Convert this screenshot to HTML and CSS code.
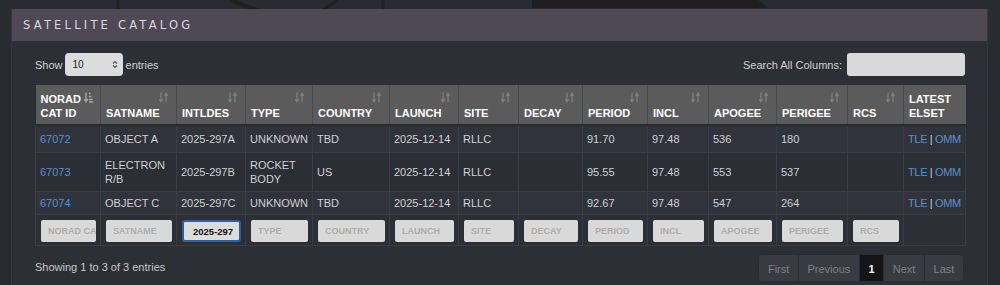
FILE: index.html
```html
<!DOCTYPE html>
<html lang="en">
<head>
    <meta charset="UTF-8">
    <title>Satellite Catalog</title>
    <link rel="stylesheet" href="styles.css">
</head>
<body>
    <div class="panel">
        <div class="panel-head">SATELLITE CATALOG</div>
        <div class="panel-body">
            <div class="controls">
                <label class="length">Show
                    <span class="select">10
                        <svg class="updown" width="6" height="9" viewBox="0 0 6 9"><path d="M1 3.5 L3 1.5 L5 3.5 M1 5.5 L3 7.5 L5 5.5" fill="none" stroke="#555" stroke-width="1.2"/></svg>
                    </span>
                    entries</label>
                <label class="search">Search All Columns: <input type="text"></label>
            </div>
            <table class="catalog">
                <thead>
                    <tr>
                        <th class="w65 sorted">NORAD<br>CAT ID<svg class="sort" width="9" height="11" viewBox="0 0 9 11"><path d="M2 0.5 V9 M0.3 7 L2 9.8 L3.7 7" fill="none" stroke="currentColor" stroke-width="1.3"/><path d="M5 1.5 H6.5 M5 4.5 H7.5 M5 7.5 H8.5 M5 10 H8.8" fill="none" stroke="currentColor" stroke-width="1.3"/></svg></th>
                        <th class="w76">SATNAME<svg class="sort" width="9" height="11" viewBox="0 0 9 11"><path d="M2 0.5 V9 M0.3 7 L2 9.8 L3.7 7 M7 10.5 V2 M5.3 4 L7 1.2 L8.7 4" fill="none" stroke="currentColor" stroke-width="1.3"/></svg></th>
                        <th class="w69">INTLDES<svg class="sort" width="9" height="11" viewBox="0 0 9 11"><path d="M2 0.5 V9 M0.3 7 L2 9.8 L3.7 7 M7 10.5 V2 M5.3 4 L7 1.2 L8.7 4" fill="none" stroke="currentColor" stroke-width="1.3"/></svg></th>
                        <th class="w67">TYPE<svg class="sort" width="9" height="11" viewBox="0 0 9 11"><path d="M2 0.5 V9 M0.3 7 L2 9.8 L3.7 7 M7 10.5 V2 M5.3 4 L7 1.2 L8.7 4" fill="none" stroke="currentColor" stroke-width="1.3"/></svg></th>
                        <th class="w77">COUNTRY<svg class="sort" width="9" height="11" viewBox="0 0 9 11"><path d="M2 0.5 V9 M0.3 7 L2 9.8 L3.7 7 M7 10.5 V2 M5.3 4 L7 1.2 L8.7 4" fill="none" stroke="currentColor" stroke-width="1.3"/></svg></th>
                        <th class="w69">LAUNCH<svg class="sort" width="9" height="11" viewBox="0 0 9 11"><path d="M2 0.5 V9 M0.3 7 L2 9.8 L3.7 7 M7 10.5 V2 M5.3 4 L7 1.2 L8.7 4" fill="none" stroke="currentColor" stroke-width="1.3"/></svg></th>
                        <th class="w60">SITE<svg class="sort" width="9" height="11" viewBox="0 0 9 11"><path d="M2 0.5 V9 M0.3 7 L2 9.8 L3.7 7 M7 10.5 V2 M5.3 4 L7 1.2 L8.7 4" fill="none" stroke="currentColor" stroke-width="1.3"/></svg></th>
                        <th class="w64">DECAY<svg class="sort" width="9" height="11" viewBox="0 0 9 11"><path d="M2 0.5 V9 M0.3 7 L2 9.8 L3.7 7 M7 10.5 V2 M5.3 4 L7 1.2 L8.7 4" fill="none" stroke="currentColor" stroke-width="1.3"/></svg></th>
                        <th class="w65">PERIOD<svg class="sort" width="9" height="11" viewBox="0 0 9 11"><path d="M2 0.5 V9 M0.3 7 L2 9.8 L3.7 7 M7 10.5 V2 M5.3 4 L7 1.2 L8.7 4" fill="none" stroke="currentColor" stroke-width="1.3"/></svg></th>
                        <th class="w61">INCL<svg class="sort" width="9" height="11" viewBox="0 0 9 11"><path d="M2 0.5 V9 M0.3 7 L2 9.8 L3.7 7 M7 10.5 V2 M5.3 4 L7 1.2 L8.7 4" fill="none" stroke="currentColor" stroke-width="1.3"/></svg></th>
                        <th class="w68">APOGEE<svg class="sort" width="9" height="11" viewBox="0 0 9 11"><path d="M2 0.5 V9 M0.3 7 L2 9.8 L3.7 7 M7 10.5 V2 M5.3 4 L7 1.2 L8.7 4" fill="none" stroke="currentColor" stroke-width="1.3"/></svg></th>
                        <th class="w71">PERIGEE<svg class="sort" width="9" height="11" viewBox="0 0 9 11"><path d="M2 0.5 V9 M0.3 7 L2 9.8 L3.7 7 M7 10.5 V2 M5.3 4 L7 1.2 L8.7 4" fill="none" stroke="currentColor" stroke-width="1.3"/></svg></th>
                        <th class="w56">RCS<svg class="sort" width="9" height="11" viewBox="0 0 9 11"><path d="M2 0.5 V9 M0.3 7 L2 9.8 L3.7 7 M7 10.5 V2 M5.3 4 L7 1.2 L8.7 4" fill="none" stroke="currentColor" stroke-width="1.3"/></svg></th>
                        <th class="w62">LATEST<br>ELSET</th>
                    </tr>
                </thead>
                <tbody>
                    <tr>
                        <td><a href="#">67072</a></td>
                        <td>OBJECT A</td>
                        <td>2025-297A</td>
                        <td>UNKNOWN</td>
                        <td>TBD</td>
                        <td>2025-12-14</td>
                        <td>RLLC</td>
                        <td></td>
                        <td>91.70</td>
                        <td>97.48</td>
                        <td>536</td>
                        <td>180</td>
                        <td></td>
                        <td class="elset"><a href="#">TLE</a> | <a href="#">OMM</a></td>
                    </tr>
                    <tr>
                        <td><a href="#">67073</a></td>
                        <td>ELECTRON<br>R/B</td>
                        <td>2025-297B</td>
                        <td>ROCKET<br>BODY</td>
                        <td>US</td>
                        <td>2025-12-14</td>
                        <td>RLLC</td>
                        <td></td>
                        <td>95.55</td>
                        <td>97.48</td>
                        <td>553</td>
                        <td>537</td>
                        <td></td>
                        <td class="elset"><a href="#">TLE</a> | <a href="#">OMM</a></td>
                    </tr>
                    <tr>
                        <td><a href="#">67074</a></td>
                        <td>OBJECT C</td>
                        <td>2025-297C</td>
                        <td>UNKNOWN</td>
                        <td>TBD</td>
                        <td>2025-12-14</td>
                        <td>RLLC</td>
                        <td></td>
                        <td>92.67</td>
                        <td>97.48</td>
                        <td>547</td>
                        <td>264</td>
                        <td></td>
                        <td class="elset"><a href="#">TLE</a> | <a href="#">OMM</a></td>
                    </tr>
                </tbody>
                <tfoot>
                    <tr>
                        <td><input placeholder="NORAD CAT ID"></td>
                        <td><input placeholder="SATNAME"></td>
                        <td><input class="focus" value="2025-297"></td>
                        <td><input placeholder="TYPE"></td>
                        <td><input placeholder="COUNTRY"></td>
                        <td><input placeholder="LAUNCH"></td>
                        <td><input placeholder="SITE"></td>
                        <td><input placeholder="DECAY"></td>
                        <td><input placeholder="PERIOD"></td>
                        <td><input placeholder="INCL"></td>
                        <td><input placeholder="APOGEE"></td>
                        <td><input placeholder="PERIGEE"></td>
                        <td><input placeholder="RCS"></td>
                        <td></td>
                    </tr>
                </tfoot>
            </table>
            <div class="footer">
                <div class="info">Showing 1 to 3 of 3 entries</div>
                <ul class="pager">
                    <li>First</li>
                    <li>Previous</li>
                    <li class="current">1</li>
                    <li>Next</li>
                    <li>Last</li>
                </ul>
            </div>
        </div>
    </div>
</body>
</html>
```

FILE: styles.css
```css
html,body{
    margin: 0;
    padding: 0;
}
body{
    background-color: #282b31;
    background-image: url("data:image/svg+xml,%3Csvg xmlns='http://www.w3.org/2000/svg' width='1000' height='12'%3E%3Cpath d='M118 0 V12' stroke='%231e2024' stroke-width='3'/%3E%3Cpath d='M230 0 L262 12' stroke='%231e2024' stroke-width='4'/%3E%3Cpath d='M338 0 L320 12' stroke='%231e2024' stroke-width='3'/%3E%3Cpath d='M383 0 V12' stroke='%231e2024' stroke-width='3'/%3E%3Cpath d='M532 0 H758 L768 8 H532 Z' fill='%231f1f21'/%3E%3C/svg%3E");
    background-repeat: no-repeat;
    padding: 9px 12px 0 11px;
    font-family: "Liberation Sans", Arial, sans-serif;
    font-size: 11px;
    color: #d2d2d4;
}
.panel{
    background: #2c2f36;
    border-left: 1px solid #34373e;
    border-right: 1px solid #34373e;
    height: 290px;
}
.panel-head{
    background: #4f4855;
    height: 32px;
    line-height: 33px;
    padding-left: 11px;
    font-family: "DejaVu Sans", sans-serif;
    font-size: 11.5px;
    letter-spacing: 3.2px;
    color: #dcd7df;
}
.panel-body{
    padding: 12px 22px 0 23px;
}
.controls{
    display: flex;
    justify-content: space-between;
    align-items: center;
    height: 23px;
}
.length{
    display: flex;
    align-items: center;
    gap: 2px;
}
.select{
    display: inline-flex;
    align-items: center;
    justify-content: space-between;
    width: 58px;
    height: 23px;
    box-sizing: border-box;
    padding: 0 5px 0 8px;
    margin-right: 1px;
    background: #dcdcdc;
    border-radius: 4px;
    color: #222;
    font-size: 10px;
}
.search{
    display: flex;
    align-items: center;
    gap: 5px;
}
.search input{
    width: 118px;
    height: 23px;
    box-sizing: border-box;
    border: none;
    border-radius: 3px;
    background: #d9d9d9;
    margin: 0;
}
.catalog{
    margin-top: 9px;
    width: 930px;
    table-layout: fixed;
    border-collapse: collapse;
}
.catalog th{
    position: relative;
    height: 40px;
    box-sizing: border-box;
    background: #5b5b5c;
    border-left: 1px solid #4a4a4c;
    border-bottom: 2px solid #2a2b2e;
    vertical-align: bottom;
    text-align: left;
    padding: 0 4px 4px 5px;
    font-size: 11px;
    line-height: 14px;
    color: #fff;
}
.catalog th:first-child{
    border-left: none;
}
.sort{
    position: absolute;
    top: 7px;
    right: 8px;
    color: #7f7f80;
}
.sorted .sort{
    right: 7px;
    color: #a9a9aa;
}
.w56{ width: 56px; }
.w60{ width: 60px; }
.w61{ width: 61px; }
.w62{ width: 62px; }
.w64{ width: 64px; }
.w65{ width: 65px; }
.w67{ width: 67px; }
.w68{ width: 68px; }
.w69{ width: 69px; }
.w71{ width: 71px; }
.w76{ width: 76px; }
.w77{ width: 77px; }
.catalog td{
    border: 1px solid #3a3d44;
    padding: 4px 4px 4px 4px;
    line-height: 14px;
    color: #d0d0d2;
    white-space: nowrap;
}
.catalog td.elset{
    letter-spacing: -0.35px;
    padding-right: 0;
}
.catalog tbody tr:nth-child(odd) td{
    background: #30333b;
}
.catalog tbody tr:nth-child(even) td{
    background: #2b2e35;
}
.catalog tbody tr:first-child td{
    padding-top: 6px;
    padding-bottom: 6px;
}
.catalog tbody tr:nth-child(2) td{
    padding-top: 5px;
    padding-bottom: 5px;
}
.catalog a{
    color: #5d8fc6;
    text-decoration: none;
}
.catalog tfoot td{
    background: #2c2f36;
    padding: 5px 4px 3px 5px;
}
.catalog tfoot input{
    display: block;
    width: 100%;
    height: 22px;
    box-sizing: border-box;
    margin: 0;
    border: none;
    border-radius: 2px;
    background: #d9d9d9;
    padding: 0 0 0 7px;
    font-family: "Liberation Sans", Arial, sans-serif;
    font-size: 9px;
    font-weight: bold;
    color: #111;
}
.catalog tfoot input::placeholder{
    color: #adadad;
}
.catalog tfoot input.focus{
    border: 2px solid #2f5ea8;
    border-radius: 3px;
    padding-left: 9px;
    font-size: 9.5px;
    background: #dcdcdc;
}
.footer{
    display: flex;
    justify-content: space-between;
    align-items: flex-start;
    margin-top: 8px;
}
.info{
    margin-top: 7px;
    color: #c9c9cb;
}
.pager{
    display: flex;
    list-style: none;
    margin: 0;
    padding: 0;
    margin-right: 1px;
}
.pager li{
    height: 28px;
    line-height: 28px;
    box-sizing: border-box;
    padding: 0 8.6px;
    background: #383b42;
    border: 1px solid #2a2c31;
    margin-left: -1px;
    color: #7d8088;
}
.pager li:first-child{
    border-radius: 4px 0 0 4px;
}
.pager li:last-child{
    border-radius: 0 4px 4px 0;
}
.pager .current{
    background: #131517;
    color: #fff;
    font-weight: bold;
}
```
